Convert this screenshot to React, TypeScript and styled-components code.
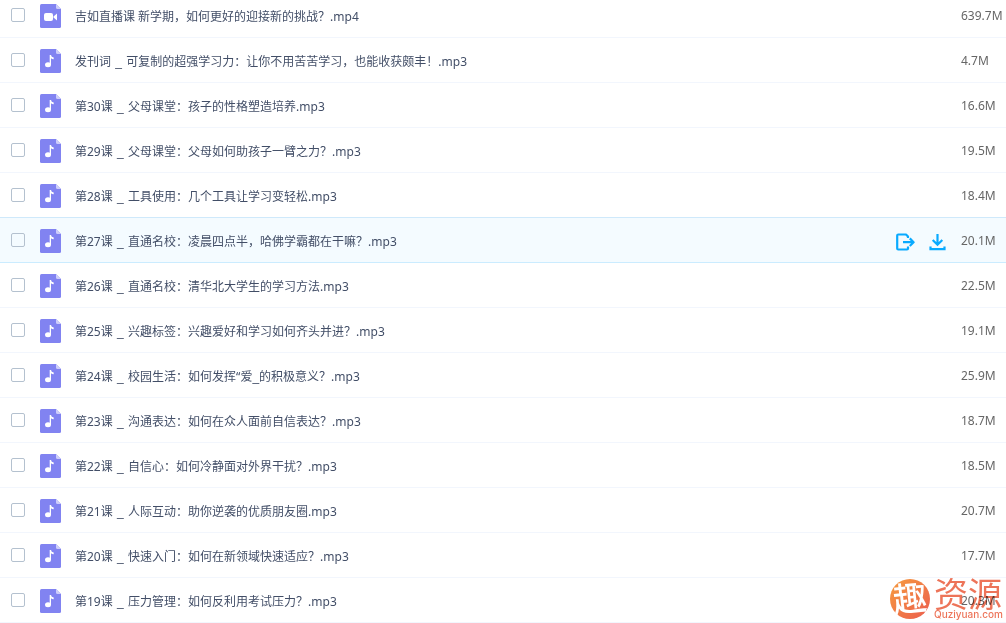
import React from "react";
import styled, { createGlobalStyle } from "styled-components";

const Global = createGlobalStyle`
  * { box-sizing: border-box; }
  body {
    margin: 0;
    background: #fff;
    overflow: hidden;
    font: 12px/18px "Noto Sans", "Noto Sans CJK SC", sans-serif;
    color: #424e67;
  }
`;

const Page = styled.main`
  position: relative;
`;

const List = styled.ul`
  list-style: none;
  margin: -7px 0 0;
  padding: 0;
`;

const Row = styled.li<{ $active?: boolean }>`
  display: flex;
  align-items: center;
  height: 45px;
  padding-left: 11px;
  border-bottom: 1px solid ${(p) => (p.$active ? "#cbecff" : "#f2f6fd")};
  background: ${(p) => (p.$active ? "#f4fbff" : "#fff")};
  box-shadow: ${(p) => (p.$active ? "0 -1px #cfe9fb" : "none")};
`;

const Pick = styled.input`
  appearance: none;
  flex: none;
  width: 14px;
  height: 14px;
  margin: 0;
  border: 1px solid #b4c1cf;
  border-radius: 2px;
  background: transparent;
`;

const FileIcon = styled.svg`
  flex: none;
  width: 21px;
  height: 24px;
  margin: 2px 14px 0 15px;
`;

const Name = styled.label`
  flex: 1;
  min-width: 0;
  padding-top: 3px;
  white-space: nowrap;
  overflow: hidden;
  text-overflow: ellipsis;
`;

const Underscore = styled.span`
  font-family: "Liberation Sans", sans-serif;
`;

const Dash = styled(Underscore)`
  padding: 0 1px;
`;

const Actions = styled.div`
  display: flex;
  gap: 12px;
  padding: 4px 14px 0 0;
`;

const Action = styled.button`
  width: 20px;
  height: 20px;
  padding: 0;
  border: 0;
  background: none;
  color: #09aaff;

  svg { display: block; }
`;

const Size = styled.span`
  flex: none;
  width: 45px;
  padding-top: 2px;
  color: #666;
`;

const Mark = styled.div`
  position: absolute;
  right: 4px;
  bottom: 3px;
  display: flex;
  align-items: center;
  gap: 4px;
  color: #ea5c3c;
  opacity: 0.85;
  mix-blend-mode: multiply;
  pointer-events: none;
`;

const MarkText = styled.div`
  display: flex;
  flex-direction: column;
  width: 68px;
`;

const MarkTitle = styled.span`
  padding-top: 2px;
  font-size: 34px;
  line-height: 28px;
`;

const MarkSite = styled.span`
  font: 500 10px/12px Inter, sans-serif;
`;

type Item = { title: React.ReactNode; lesson?: string; size: string; video?: boolean; active?: boolean };

const items: Item[] = [
  { title: "吉如直播课 新学期，如何更好的迎接新的挑战？.mp4", size: "639.7M", video: true },
  { lesson: "发刊词", title: "可复制的超强学习力：让你不用苦苦学习，也能收获颇丰！.mp3", size: "4.7M" },
  { lesson: "第30课", title: "父母课堂：孩子的性格塑造培养.mp3", size: "16.6M" },
  { lesson: "第29课", title: "父母课堂：父母如何助孩子一臂之力？.mp3", size: "19.5M" },
  { lesson: "第28课", title: "工具使用：几个工具让学习变轻松.mp3", size: "18.4M" },
  { lesson: "第27课", title: "直通名校：凌晨四点半，哈佛学霸都在干嘛？.mp3", size: "20.1M", active: true },
  { lesson: "第26课", title: "直通名校：清华北大学生的学习方法.mp3", size: "22.5M" },
  { lesson: "第25课", title: "兴趣标签：兴趣爱好和学习如何齐头并进？.mp3", size: "19.1M" },
  {
    lesson: "第24课",
    title: <>校园生活：如何发挥“爱<Underscore>_</Underscore>的积极意义？.mp3</>,
    size: "25.9M",
  },
  { lesson: "第23课", title: "沟通表达：如何在众人面前自信表达？.mp3", size: "18.7M" },
  { lesson: "第22课", title: "自信心：如何冷静面对外界干扰？.mp3", size: "18.5M" },
  { lesson: "第21课", title: "人际互动：助你逆袭的优质朋友圈.mp3", size: "20.7M" },
  { lesson: "第20课", title: "快速入门：如何在新领域快速适应？.mp3", size: "17.7M" },
  { lesson: "第19课", title: "压力管理：如何反利用考试压力？.mp3", size: "20.3M" },
];

function TypeIcon({ video }: { video?: boolean }) {
  return (
    <FileIcon viewBox="0 0 21 24" aria-hidden="true">
      <path d="M1.500 0H16L21 5V22.500Q21 24 19.500 24H1.500Q0 24 0 22.500V1.500Q0 0 1.500 0Z" fill="#8183f1" />
      <path d="M16 0L21 5H17.500Q16 5 16 3.500Z" fill="#cdcdfa" />
      {video ? (
        <g fill="#fff">
          <rect x="4" y="9" width="9" height="8" rx="2" />
          <path d="M13.500 12.500L17 9.500V16.500L13.500 13.500Z" />
        </g>
      ) : (
        <g fill="#fff">
          <ellipse cx="8" cy="15.700" rx="3" ry="2.500" />
          <path d="M9.700 6H11Q11.200 8 13.700 8.500V10.200Q12 10.200 11 9.300V16H9.700Z" />
        </g>
      )}
    </FileIcon>
  );
}

function ShareIcon() {
  return (
    <svg width="20" height="20" viewBox="0 0 20 20" fill="none" stroke="currentColor" strokeWidth="2.200" strokeLinejoin="round">
      <path d="M13 6V4.500L11 2.500H3.200Q2.200 2.500 2.200 3.500V16.500Q2.200 17.500 3.200 17.500H12Q13 17.500 13 16.500V14.500M8 10.200H18.500M14.800 6.400L18.600 10.200L14.800 14" />
    </svg>
  );
}

function DownloadIcon() {
  return (
    <svg width="20" height="20" viewBox="0 0 20 20" fill="none" stroke="currentColor" strokeWidth="2.200">
      <path d="M10.500 2V12.500M5.700 8L10.500 12.700L15.300 8M3.500 14.500V17.200H17.500V14.500" />
    </svg>
  );
}

export default function App() {
  return (
    <Page>
      <Global />
      <List>
        {items.map((item, i) => (
          <Row key={i} $active={item.active}>
            <Pick type="checkbox" id={`file-${i}`} />
            <TypeIcon video={item.video} />
            <Name htmlFor={`file-${i}`}>
              {item.lesson}
              {item.lesson && <Dash> _ </Dash>}
              {item.title}
            </Name>
            {item.active && (
              <Actions>
                <Action type="button" aria-label="分享"><ShareIcon /></Action>
                <Action type="button" aria-label="下载"><DownloadIcon /></Action>
              </Actions>
            )}
            <Size>{item.size}</Size>
          </Row>
        ))}
      </List>
      <Mark>
        <svg width="40" height="40" viewBox="0 0 40 40">
          <defs>
            <linearGradient id="mark" x1="0" y1="0" x2="1" y2="1">
              <stop offset="0" stopColor="#f58a1c" />
              <stop offset="1" stopColor="#e8402f" />
            </linearGradient>
          </defs>
          <circle cx="20" cy="20" r="20" fill="url(#mark)" />
          <text x="20" y="32" textAnchor="middle" fontSize="34" fontWeight="500" fill="#fff" transform="rotate(-6 20 20)">趣</text>
        </svg>
        <MarkText>
          <MarkTitle>资源</MarkTitle>
          <MarkSite>Quziyuan.com</MarkSite>
        </MarkText>
      </Mark>
    </Page>
  );
}
